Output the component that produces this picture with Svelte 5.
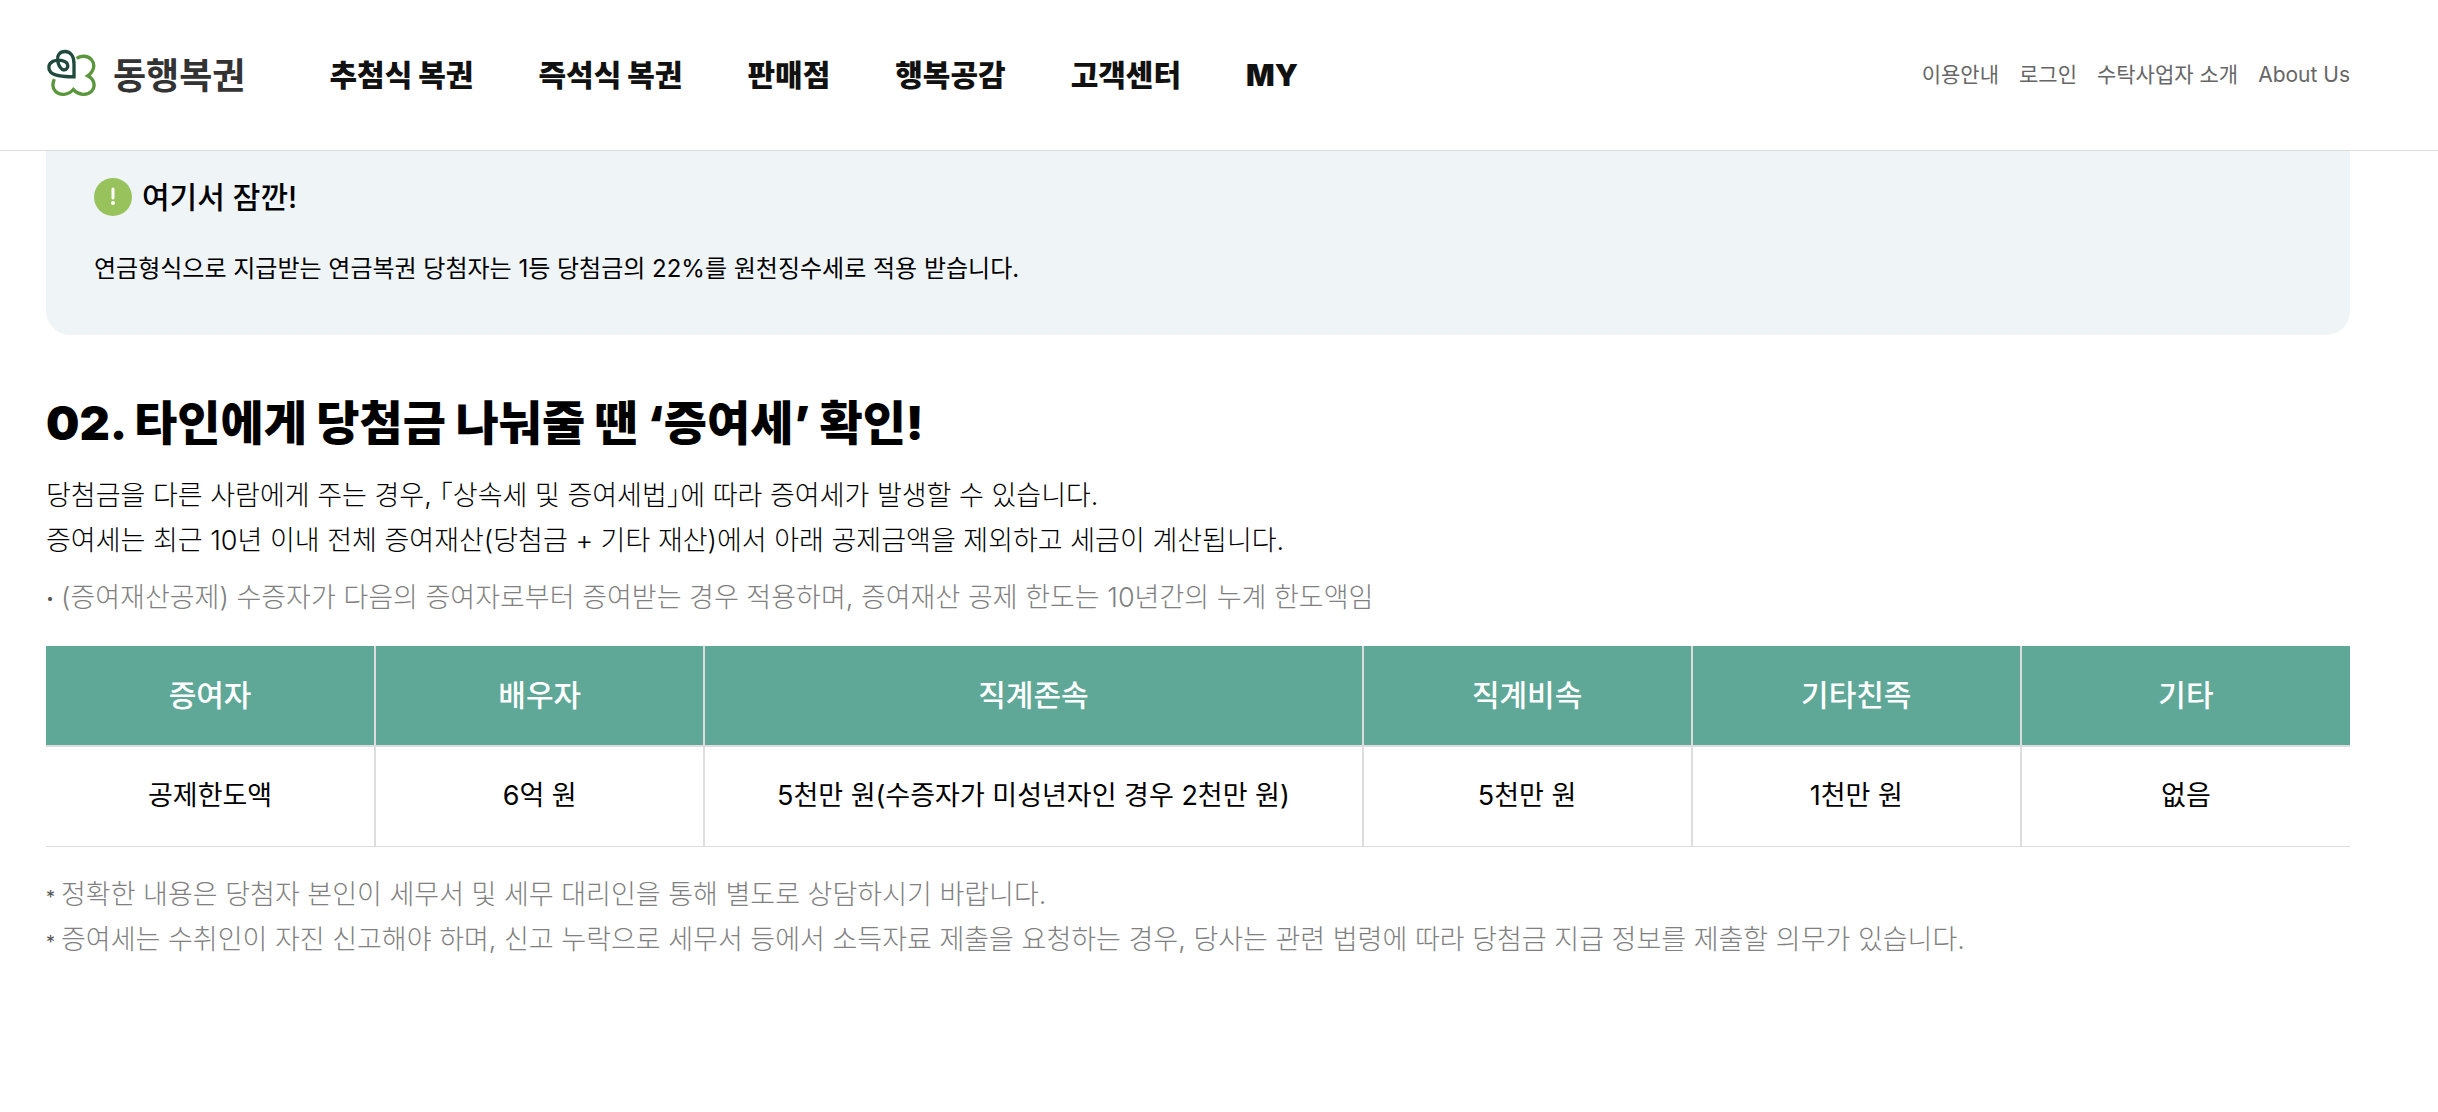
<script>
  const menus = ['추첨식 복권', '즉석식 복권', '판매점', '행복공감', '고객센터', 'MY'];
  const utils = ['이용안내', '로그인', '수탁사업자 소개', 'About Us'];

  // 증여재산 공제 한도
  const columns = [
    { name: '증여자', value: '공제한도액' },
    { name: '배우자', value: '6억 원' },
    { name: '직계존속', value: '5천만 원(수증자가 미성년자인 경우 2천만 원)', wide: true },
    { name: '직계비속', value: '5천만 원' },
    { name: '기타친족', value: '1천만 원' },
    { name: '기타', value: '없음' }
  ];

  const notes = [
    '정확한 내용은 당첨자 본인이 세무서 및 세무 대리인을 통해 별도로 상담하시기 바랍니다.',
    '증여세는 수취인이 자진 신고해야 하며, 신고 누락으로 세무서 등에서 소득자료 제출을 요청하는 경우, 당사는 관련 법령에 따라 당첨금 지급 정보를 제출할 의무가 있습니다.'
  ];
</script>

<header class="header">
  <a class="logo" href="#main">
    <svg viewBox="0 0 150 146" aria-hidden="true">
      <path class="clover" d="M92 28 C103 18 125 19 136 31 C149 46 144 67 125 80 C145 90 150 112 137 126 C122 141 98 138 82 121 C67 138 42 141 28 126 C19 116 19 103 25 90" />
      <path class="leaf" d="M84 83 V44 C84 20 73 7 57 7 C41 7 33 19 35 32 C36 43 39 51 44 56 C50 65 60 64 64 56 C68 48 63 40 56 37 C46 33 30 32 20 37 C7 44 5 58 14 69 C25 81 50 83 84 83 Z" />
    </svg>
    <span>동행복권</span>
  </a>
  <nav class="menu">
    {#each menus as menu}
      <a href="#menu">{menu}</a>
    {/each}
  </nav>
  <div class="utils">
    {#each utils as item}
      <a href="#util">{item}</a>
    {/each}
  </div>
</header>

<main class="content" id="main">
  <section class="notice">
    <h3>
      <svg viewBox="0 0 38 38" aria-hidden="true">
        <circle cx="19" cy="19" r="19" fill="#98c25c" />
        <path d="M19 11 V20" stroke="#fff" stroke-width="3" stroke-linecap="round" />
        <circle cx="19" cy="25" r="2" fill="#fff" />
      </svg>
      여기서 잠깐!
    </h3>
    <p>연금형식으로 지급받는 연금복권 당첨자는 1등 당첨금의 22%를 원천징수세로 적용 받습니다.</p>
  </section>

  <section class="gift">
    <h2>02. 타인에게 당첨금 나눠줄 땐 ‘증여세’ 확인!</h2>
    <p class="desc">당첨금을 다른 사람에게 주는 경우, ｢상속세 및 증여세법｣에 따라 증여세가 발생할 수 있습니다.</p>
    <p class="desc">증여세는 최근 10년 이내 전체 증여재산(당첨금 + 기타 재산)에서 아래 공제금액을 제외하고 세금이 계산됩니다.</p>
    <p class="sub"><i>·</i>(증여재산공제) 수증자가 다음의 증여자로부터 증여받는 경우 적용하며, 증여재산 공제 한도는 10년간의 누계 한도액임</p>

    <table>
      <colgroup>
        {#each columns as col}
          <col class:wide={col.wide} />
        {/each}
      </colgroup>
      <thead>
        <tr>
          {#each columns as col}
            <th scope="col">{col.name}</th>
          {/each}
        </tr>
      </thead>
      <tbody>
        <tr>
          {#each columns as col}
            <td>{col.value}</td>
          {/each}
        </tr>
      </tbody>
    </table>

    <ul class="notes">
      {#each notes as note}
        <li><i>*</i>{note}</li>
      {/each}
    </ul>
  </section>
</main>

<style>
  :global(body) {
    background: #fff;
    color: #000;
    font-family: Inter, 'Noto Sans CJK KR', sans-serif;
  }

  a {
    color: inherit;
    text-decoration: none;
  }

  h2,
  h3,
  p,
  ul {
    margin: 0;
    padding: 0;
  }

  i {
    font-style: normal;
  }

  /* header */
  .header {
    display: flex;
    align-items: center;
    box-sizing: border-box;
    height: 151px;
    padding: 0 88px 4px 46px;
    border-bottom: 1px solid #ddd;
    white-space: nowrap;
  }

  .logo {
    display: flex;
    align-items: center;
    gap: 17px;
    color: #333;
    font-size: 36px;
    font-weight: 700;
  }

  .logo svg {
    width: 50px;
    height: 49px;
  }

  .logo path {
    fill: none;
    stroke-width: 10;
  }

  .logo .clover {
    stroke: #5a963c;
  }

  .logo .leaf {
    stroke: #1f4a3d;
  }

  .menu {
    display: flex;
    align-items: baseline;
    gap: 65px;
    margin-left: 84px;
    color: #111;
    font-size: 30px;
    font-weight: 900;
  }

  .utils {
    display: flex;
    align-items: baseline;
    gap: 20px;
    margin-left: auto;
    color: #666;
    font-size: 21px;
  }

  .content {
    padding: 0 88px 0 46px;
  }

  /* notice */
  .notice {
    padding: 24px 48px 46px;
    border-radius: 0 0 24px 24px;
    background: #eff4f7;
  }

  .notice h3 {
    display: flex;
    align-items: center;
    gap: 10px;
    font-size: 30px;
    font-weight: 500;
    line-height: 44px;
  }

  .notice h3 svg {
    width: 38px;
    height: 38px;
  }

  .notice p {
    margin-top: 30px;
    font-size: 24px;
    line-height: 40px;
  }

  /* gift tax */
  .gift h2 {
    margin-top: 54px;
    font-size: 47px;
    font-weight: 900;
    line-height: 68px;
  }

  .desc,
  .sub,
  .notes {
    font-size: 27px;
    font-weight: 300;
    line-height: 45px;
  }

  .gift h2 + .desc {
    margin-top: 16px;
  }

  .sub,
  .notes {
    color: #808080;
  }

  .sub {
    margin-top: 12px;
  }

  .sub i,
  .notes i {
    display: inline-block;
    width: 15px;
    color: #555;
    font-size: 18px;
    font-weight: 400;
    line-height: 18px;
  }

  .sub i {
    font-size: 24px;
    font-weight: 700;
  }

  table {
    width: 100%;
    margin-top: 26px;
    border-collapse: collapse;
    table-layout: fixed;
  }

  col.wide {
    width: 28.57%;
  }

  th,
  td {
    box-sizing: border-box;
    height: 100px;
    padding: 0 0 6px;
    border: solid #ddd;
    border-width: 0 2px 1px 0;
    text-align: center;
  }

  th:last-child,
  td:last-child {
    border-right: 0;
  }

  th {
    border-bottom-width: 2px;
    background: #5fa898;
    color: #fff;
    font-size: 30px;
    font-weight: 500;
  }

  td {
    font-size: 27px;
  }

  .notes {
    margin-top: 25px;
    list-style: none;
  }
</style>
